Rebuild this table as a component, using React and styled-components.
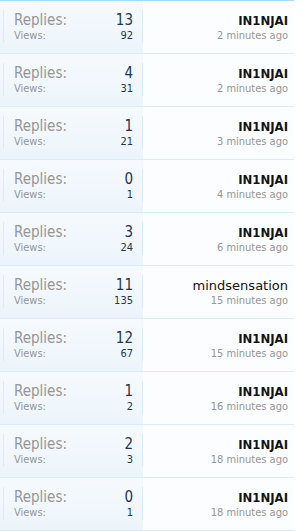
import React from "react";
import styled, { createGlobalStyle } from "styled-components";

const GlobalStyle = createGlobalStyle`
  body {
    margin: 0;
    background: #ffffff;
    font-family: "DejaVu Sans Condensed", "DejaVu Sans", "Liberation Sans", sans-serif;
  }
`;

const List = styled.div`
  width: 294px;
  border-top: 1px solid #a6dcf6;
`;

const Row = styled.div`
  display: flex;
  height: 52px;
  border-bottom: 1px solid #d7edfc;
  background: #fbfdfe;
`;

const Stats = styled.div`
  width: 143px;
  flex: 0 0 143px;
  background: linear-gradient(to bottom, #f6fafe 0%, #ecf4fb 100%);
`;

const StatsBox = styled.dl`
  margin: 9px 0 0 3px;
  height: 33px;
  padding: 1px 9px 0 10px;
  border-left: 1px solid #d7edfc;
  border-right: 1px solid #d7edfc;
  box-sizing: border-box;
`;

const StatLine = styled.div`
  display: flex;
  justify-content: space-between;
  font-size: ${(p) => (p.major ? "15px" : "11px")};
  line-height: ${(p) => (p.major ? "18px" : "13px")};
`;

const Label = styled.dt`
  color: #969696;
`;

const Value = styled.dd`
  margin: 0;
  color: #23364f;
`;

const LastPost = styled.div`
  flex: 1;
  display: flex;
  flex-direction: column;
  align-items: flex-end;
  padding: 11px 6px 0 0;
`;

const Username = styled.a`
  font-size: 13px;
  line-height: 17px;
  color: #141414;
  font-weight: ${(p) => (p.plain ? "normal" : "bold")};
  font-family: ${(p) =>
    p.plain
      ? '"DejaVu Sans", "Liberation Sans", sans-serif'
      : '"DejaVu Sans Condensed", "DejaVu Sans", sans-serif'};
  text-decoration: none;
`;

const Time = styled.span`
  font-size: 11px;
  line-height: 13px;
  color: #969696;
`;

const threads = [
  { replies: 13, views: 92, user: "IN1NJAI", time: "2 minutes ago" },
  { replies: 4, views: 31, user: "IN1NJAI", time: "2 minutes ago" },
  { replies: 1, views: 21, user: "IN1NJAI", time: "3 minutes ago" },
  { replies: 0, views: 1, user: "IN1NJAI", time: "4 minutes ago" },
  { replies: 3, views: 24, user: "IN1NJAI", time: "6 minutes ago" },
  { replies: 11, views: 135, user: "mindsensation", time: "15 minutes ago", plain: true },
  { replies: 12, views: 67, user: "IN1NJAI", time: "15 minutes ago" },
  { replies: 1, views: 2, user: "IN1NJAI", time: "16 minutes ago" },
  { replies: 2, views: 3, user: "IN1NJAI", time: "18 minutes ago" },
  { replies: 0, views: 1, user: "IN1NJAI", time: "18 minutes ago" },
];

const App = () => (
  <>
    <GlobalStyle />
    <List>
      {threads.map((t, i) => (
        <Row key={i}>
          <Stats>
            <StatsBox>
              <StatLine major>
                <Label>Replies:</Label>
                <Value>{t.replies}</Value>
              </StatLine>
              <StatLine>
                <Label>Views:</Label>
                <Value>{t.views}</Value>
              </StatLine>
            </StatsBox>
          </Stats>
          <LastPost>
            <Username plain={t.plain}>{t.user}</Username>
            <Time>{t.time}</Time>
          </LastPost>
        </Row>
      ))}
    </List>
  </>
);

export default App;
